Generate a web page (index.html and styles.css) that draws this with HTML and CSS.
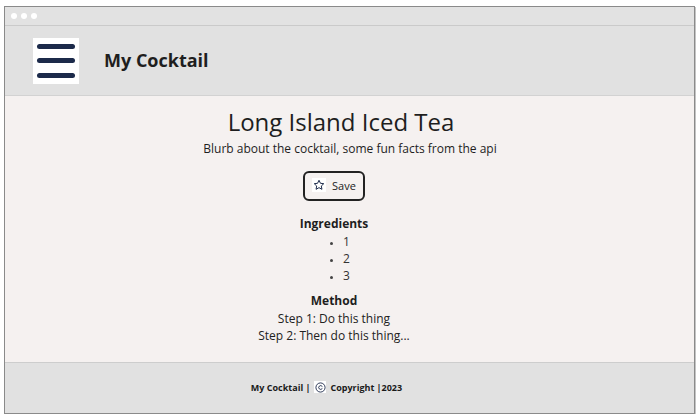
FILE: index.html
```html
<!DOCTYPE html>
<html>
<head>
<meta charset="utf-8">
<link rel="stylesheet" href="styles.css">
</head>
<body>
<div class="frame">
  <div class="titlebar">
    <span class="dot"></span><span class="dot"></span><span class="dot"></span>
  </div>
  <header class="header">
    <div class="logo">
      <span class="bar"></span><span class="bar"></span><span class="bar"></span>
    </div>
    <h1 class="brand">My Cocktail</h1>
  </header>
  <main class="main">
    <h2 class="title">Long Island Iced Tea</h2>
    <p class="blurb">Blurb about the cocktail, some fun facts from the api</p>
    <button class="save">
      <span class="star-box">
        <svg width="12" height="12" viewBox="0 0 24 24"><path d="M12 2.5l2.9 6.1 6.6.8-4.9 4.6 1.3 6.6L12 17.3l-5.9 3.3 1.3-6.6-4.9-4.6 6.6-.8z" fill="none" stroke="#1c2a4a" stroke-width="2" stroke-linejoin="round"/></svg>
      </span>
      <span>Save</span>
    </button>
    <h3 class="section-title">Ingredients</h3>
    <ul class="ingredients">
      <li>1</li>
      <li>2</li>
      <li>3</li>
    </ul>
    <h3 class="section-title method-title">Method</h3>
    <div class="steps">
      <div>Step 1: Do this thing</div>
      <div>Step 2: Then do this thing...</div>
    </div>
  </main>
  <footer class="footer">
    <span>My Cocktail |</span>
    <span class="copy-box">
      <svg width="11" height="11" viewBox="0 0 24 24"><circle cx="12" cy="12" r="10" fill="none" stroke="#1c2a4a" stroke-width="2"/><path d="M15.5 9.2a4.2 4.2 0 1 0 0 5.6" fill="none" stroke="#1c2a4a" stroke-width="2" stroke-linecap="round"/></svg>
    </span>
    <span>Copyright |2023</span>
  </footer>
</div>
</body>
</html>
```

FILE: styles.css
```css
* { box-sizing: border-box; }
html, body { margin: 0; padding: 0; background: #ffffff; }
body { font-family: "Open Sans", "Liberation Sans", sans-serif; color: #222; }

.frame {
  margin: 6px 0 0 4px;
  width: 691px;
  height: 408px;
  border: 1px solid #8a8a8a;
  box-shadow: 1px 1px 0 #c4c4c4;
  display: flex;
  flex-direction: column;
  background: #e1e1e1;
}

.titlebar {
  height: 19px;
  border-bottom: 1px solid #cacaca;
  background: #e2e2e2;
  display: flex;
  align-items: center;
  gap: 4px;
  padding-left: 6px;
}
.dot { width: 6px; height: 6px; border-radius: 50%; background: #fff; }

.header {
  height: 70px;
  background: #e1e1e1;
  border-bottom: 1px solid #d2d2d2;
  display: flex;
  align-items: center;
  padding-left: 28px;
  gap: 25px;
}
.logo {
  width: 46px; height: 46px;
  background: #fff;
  display: flex; flex-direction: column; justify-content: center;
  align-items: center; gap: 9.5px;
}
.bar { width: 38px; height: 5px; border-radius: 3px; background: #1c2a4a; }
.brand { margin: 0 0 2px 0; font-size: 18px; font-weight: 700; color: #1e1e1e; }

.main {
  flex: 1;
  background: #f5f1f0;
  border-bottom: 1px solid #cdcdcd;
  display: flex;
  flex-direction: column;
  align-items: center;
  padding-top: 8px;
  padding-right: 31px;
}
.title {
  margin: 0 0 0 14px;
  font-size: 24px;
  font-weight: 400;
  line-height: 36px;
  color: #1e1e1e;
}
.blurb {
  margin: 0 0 0 32px;
  font-size: 12px;
  line-height: 18px;
  color: #1e1e1e;
}
.save {
  margin-top: 13px;
  height: 30px;
  width: 62px;
  border: 2px solid #222;
  border-radius: 6px;
  background: transparent;
  font-family: inherit;
  font-size: 11px;
  color: #222;
  display: flex;
  align-items: center;
  justify-content: center;
  gap: 6px;
  padding: 0 0 2px 0;
}
.star-box {
  width: 14px; height: 14px; background: #fff;
  display: flex; align-items: center; justify-content: center;
}
.section-title {
  margin: 14px 0 0 0;
  font-size: 12px;
  font-weight: 700;
  line-height: 18px;
  color: #1e1e1e;
}
.ingredients {
  margin: 0;
  padding: 0 0 0 25px;
  font-size: 12px;
  line-height: 17px;
  list-style: disc;
  color: #333;
}
.ingredients li::marker { font-size: 9px; color: #444; }
.method-title { margin-top: 8px; }
.steps {
  font-size: 12px;
  line-height: 17px;
  text-align: center;
  color: #222;
}

.footer {
  height: 50px;
  background: #e1e1e1;
  display: flex;
  align-items: center;
  justify-content: center;
  gap: 3px;
  padding-right: 46px;
  padding-bottom: 2px;
  font-size: 9px;
  font-weight: 700;
  color: #1a1a1a;
}
.copy-box {
  width: 12px; height: 12px; background: #fff;
  display: flex; align-items: center; justify-content: center;
  margin: 0 1px;
}
```
